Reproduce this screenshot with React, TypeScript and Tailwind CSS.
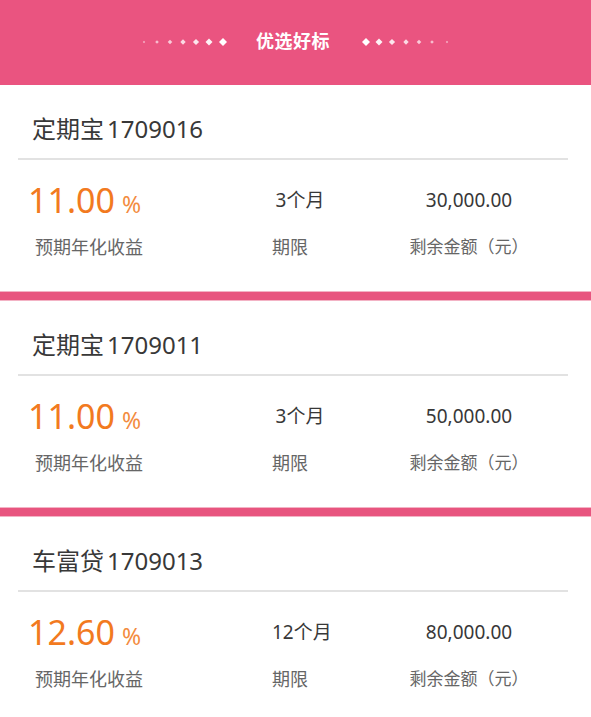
import React from 'react';

interface Loan {
  name: string;
  code: string;
  rate: string;
  term: string;
  remain: string;
}

const loans: Loan[] = [
  { name: '定期宝', code: '1709016', rate: '11.00', term: '3个月', remain: '30,000.00' },
  { name: '定期宝', code: '1709011', rate: '11.00', term: '3个月', remain: '50,000.00' },
  { name: '车富贷', code: '1709013', rate: '12.60', term: '12个月', remain: '80,000.00' },
];

const font = { fontFamily: '"Noto Sans", "Noto Sans CJK SC", sans-serif' };

// diamond dots beside the header title, radius grows toward the title
const Dots = ({ reverse }: { reverse?: boolean }) => {
  const radii = [1.2, 1.8, 2.3, 2.7, 3.1, 3.5, 4];
  const list = reverse ? [...radii].reverse() : radii;
  const xs = reverse ? [5, 18, 31, 45, 58, 71, 86] : [4, 17, 30, 43, 56, 69, 83];
  return (
    <svg width="90" height="12" viewBox="0 0 90 12">
      {list.map((r, i) => (
        <polygon
          key={i}
          points={`${xs[i]},${6 - r} ${xs[i] + r},6 ${xs[i]},${6 + r} ${xs[i] - r},6`}
          fill="#fff"
          opacity={0.55 + (reverse ? 6 - i : i) * 0.075}
        />
      ))}
    </svg>
  );
};

const Band = () => (
  <div className="h-[10px] bg-[#e8557f] border-y border-[#f3b3c5]" />
);

const LoanCard = ({ loan }: { loan: Loan }) => (
  <div className="h-[206px] bg-white pt-[28px]">
    <div className="h-[32px] pl-[32px] flex items-center gap-[3px] text-[24px] text-[#383838]">
      <span>{loan.name}</span>
      <span>{loan.code}</span>
    </div>
    <div className="mt-[13px] ml-[18px] mr-[23px] h-[2px] bg-[#e2e2e2]" />
    <div className="flex mt-[20px]">
      <div className="w-[272px] pl-[28px]">
        <div className="h-[40px] flex items-baseline text-[#f27a1f]">
          <span className="text-[34px] leading-[40px]">{loan.rate}</span>
          <span className="text-[23px] ml-[7px] text-[#f38c40]">%</span>
        </div>
        <div className="mt-[15px] pl-[7px] h-[24px] leading-[24px] text-[18px] text-[#666]">预期年化收益</div>
      </div>
      <div className="w-[56px]">
        <div className="h-[40px] leading-[40px] text-center text-[19px] text-[#383838] whitespace-nowrap">{loan.term}</div>
        <div className="mt-[15px] h-[24px] leading-[24px] text-[18px] text-[#666] whitespace-nowrap">期限</div>
      </div>
      <div className="flex-1 pl-[19px] text-center">
        <div className="h-[40px] leading-[40px] text-[19px] text-[#383838]">{loan.remain}</div>
        <div className="mt-[15px] h-[24px] leading-[24px] text-[17px] text-[#666] whitespace-nowrap">剩余金额（元）</div>
      </div>
    </div>
  </div>
);

export default function App() {
  return (
    <div className="w-[591px] h-[717px] overflow-hidden bg-white" style={font}>
      <div className="h-[85px] bg-[#ea5480] flex items-center justify-center pb-[2px]">
        <Dots />
        <span className="ml-[26px] mr-[31px] text-[18px] font-bold text-white tracking-[0.5px]">优选好标</span>
        <Dots reverse />
      </div>
      {loans.map((loan, i) => (
        <React.Fragment key={i}>
          {i > 0 && <Band />}
          <LoanCard loan={loan} />
        </React.Fragment>
      ))}
    </div>
  );
}
